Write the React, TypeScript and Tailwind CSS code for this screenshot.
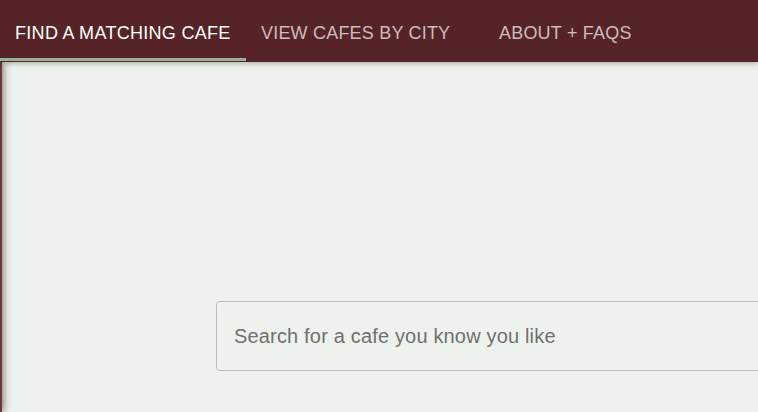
import React from "react";

export default function App() {
  return (
    <div
      className="relative w-[758px] h-[412px] overflow-hidden bg-[#edf3ec]"
      style={{ fontFamily: '"Liberation Sans", Arial, sans-serif' }}
    >
      <header className="relative z-10 flex h-[62px] bg-[#562426] shadow-[0_2px_5px_rgba(0,0,0,0.25)]">
        <div className="relative flex items-center w-[246px] pl-[15px] pt-[3px] text-[18px] tracking-[0.3px] text-white leading-none">
          FIND A MATCHING CAFE
          <span className="absolute left-0 right-0 bottom-[1px] h-[3px] bg-[#9aaf98]" />
        </div>
        <div className="flex items-center pl-[15px] pt-[3px] w-[253px] text-[18px] tracking-[0.2px] text-[#ccbdbe] leading-none">
          VIEW CAFES BY CITY
        </div>
        <div className="flex items-center pt-[3px] text-[18px] tracking-[0.2px] text-[#ccbdbe] leading-none">
          ABOUT + FAQS
        </div>
      </header>
      <div className="absolute left-[-10px] top-[62px] bottom-0 w-[12px] bg-[#6a3a3b] shadow-[2px_0_7px_rgba(60,20,20,0.5)]" />
      <main className="pt-[239px] pl-[216px]">
        <div className="flex items-center w-[620px] h-[70px] border border-[#b7beb6] rounded-[4px] pl-[17px] text-[20px] tracking-[0.17px] text-[#6d716d]">
          Search for a cafe you know you like
        </div>
      </main>
    </div>
  );
}
